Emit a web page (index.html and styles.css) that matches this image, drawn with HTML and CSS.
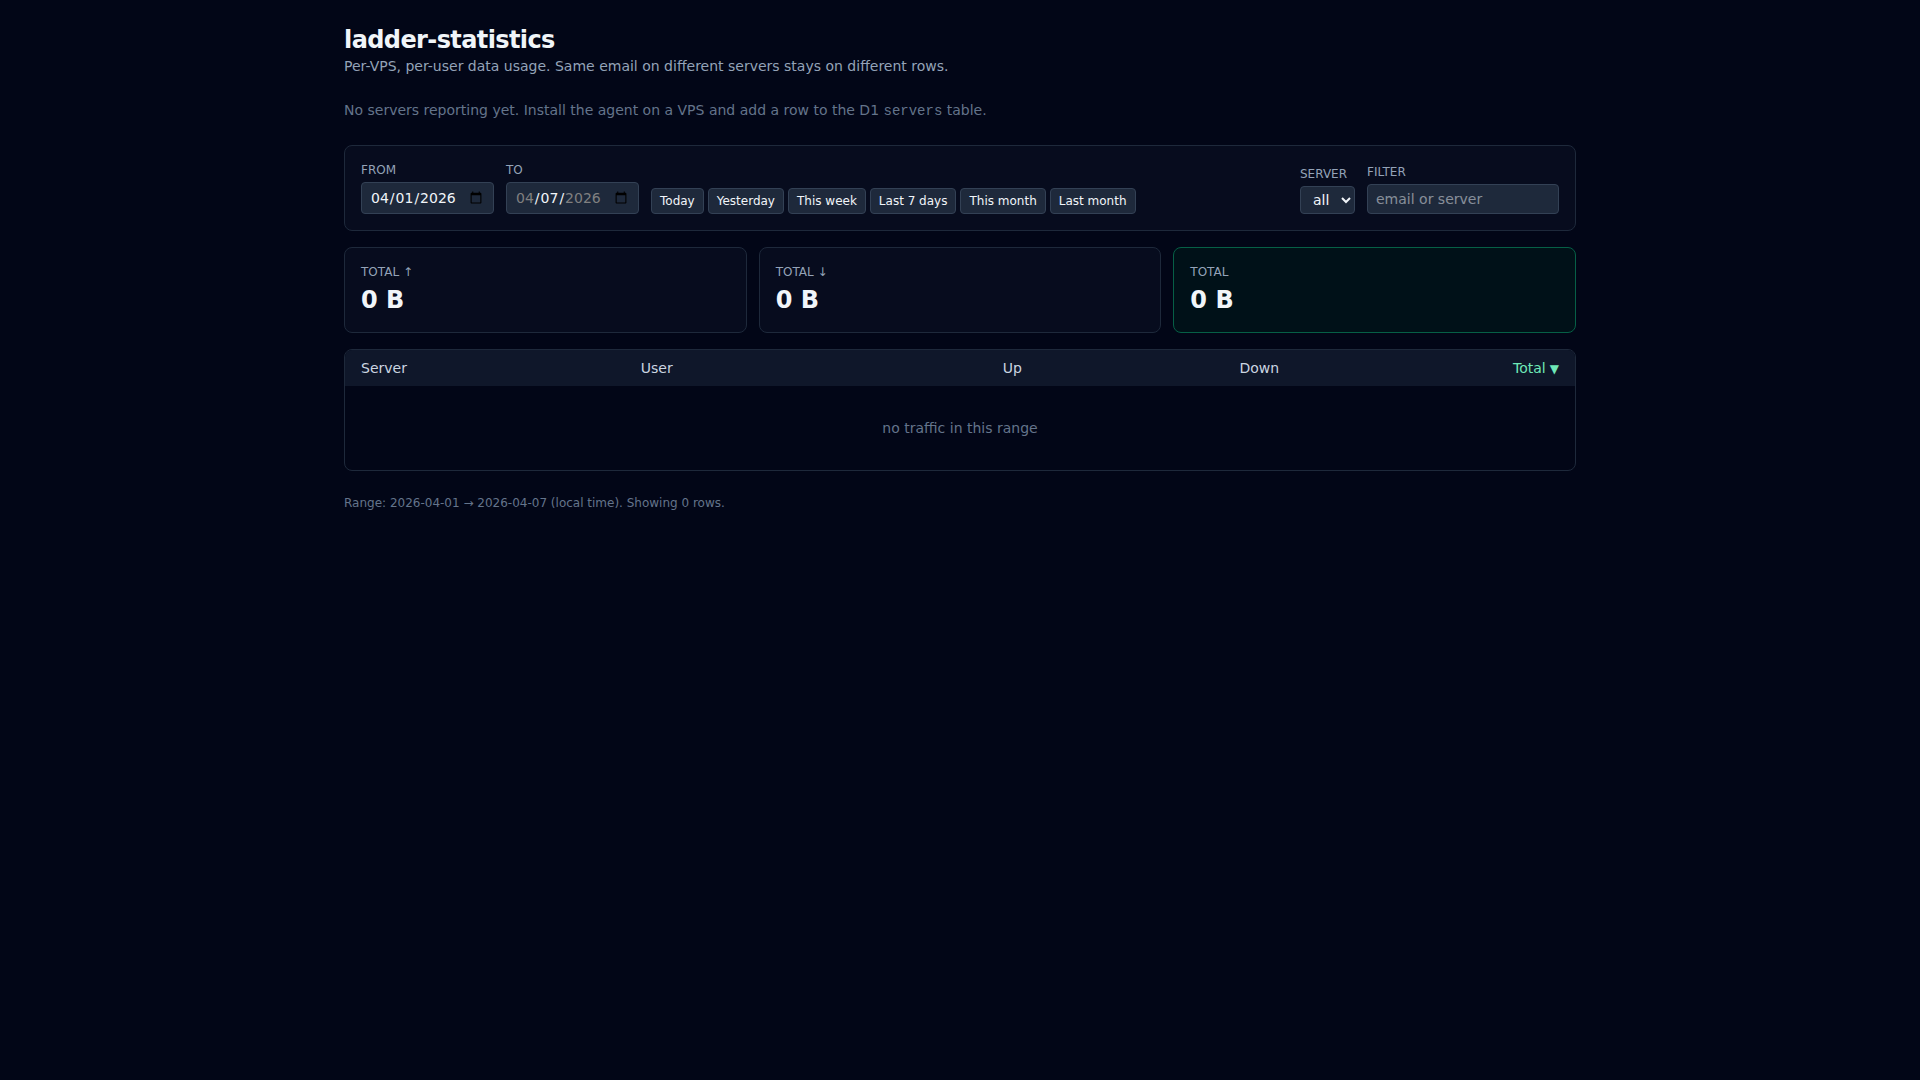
FILE: index.html
```html
<!DOCTYPE html>
<html lang="en">
<head>
<meta charset="utf-8">
<title>ladder-statistics</title>
<link rel="stylesheet" href="styles.css">
</head>
<body>
<main class="page">
  <header class="intro">
    <h1>ladder-statistics</h1>
    <p>Per-VPS, per-user data usage. Same email on different servers stays on different rows.</p>
  </header>
  <p class="notice">No servers reporting yet. Install the agent on a VPS and add a row to the D1 <code>servers</code> table.</p>
  <section class="filters">
    <label class="field"><span>From</span><input class="date" type="date" value="2026-04-01" max="2026-04-07"></label>
    <label class="field"><span>To</span><input class="date" type="date" value="2026-04-07" min="2026-04-01" max="2026-04-07"></label>
    <div class="presets">
      <button>Today</button><button>Yesterday</button><button>This week</button><button>Last 7 days</button><button>This month</button><button>Last month</button>
    </div>
    <div class="search">
      <label class="field"><span>Server</span><select><option>all</option></select></label>
      <label class="field"><span>Filter</span><input class="query" type="text" placeholder="email or server"></label>
    </div>
  </section>
  <section class="totals">
    <div class="card"><div class="label">Total ↑</div><div class="value">0 B</div></div>
    <div class="card"><div class="label">Total ↓</div><div class="value">0 B</div></div>
    <div class="card accent"><div class="label">Total</div><div class="value">0 B</div></div>
  </section>
  <div class="table-wrap">
    <table>
      <thead><tr><th>Server</th><th>User</th><th class="num">Up</th><th class="num">Down</th><th class="num sorted">Total<span class="arrow">▼</span></th></tr></thead>
      <tbody><tr><td colspan="5">no traffic in this range</td></tr></tbody>
    </table>
  </div>
  <footer>Range: 2026-04-01 → 2026-04-07 (local time). Showing 0 rows.</footer>
</main>
</body>
</html>
```
FILE: styles.css
```css
*, *::before, *::after { box-sizing: border-box; margin: 0; }
body {
  background: #020617;
  color: #f1f5f9;
  font: 14px/20px "DejaVu Sans", sans-serif;
}
button, input, select { font: inherit; color: inherit; }
.page { width: 1280px; margin: 0 auto; padding: 24px; }
.intro { margin-bottom: 24px; }
h1 { font-size: 24px; line-height: 32px; font-weight: 600; letter-spacing: -0.6px; }
.intro p { color: #94a3b8; }
.notice { color: #64748b; margin-bottom: 24px; }
code { font-family: "Liberation Mono", monospace; font-size: 14px; }
.filters {
  display: flex;
  align-items: flex-end;
  gap: 12px;
  padding: 16px;
  margin-bottom: 16px;
  border: 1px solid #1e293b;
  border-radius: 8px;
  background: rgba(15, 23, 42, 0.4);
}
.field { display: flex; flex-direction: column; }
.field span {
  margin-bottom: 4px;
  font-size: 12px;
  line-height: 16px;
  color: #94a3b8;
  text-transform: uppercase;
}
.field input, .field select {
  background: #1e293b;
  border: 1px solid #334155;
  border-radius: 4px;
  padding: 4px 8px;
}
.query { width: 192px; }
.query::placeholder { color: color-mix(in oklab, currentcolor 50%, transparent); }
.presets { display: flex; gap: 4px; }
.presets button {
  padding: 4px 8px;
  background: #1e293b;
  border: 1px solid #334155;
  border-radius: 4px;
  font-size: 12px;
  line-height: 16px;
}
.search { display: flex; align-items: flex-end; gap: 12px; margin-left: auto; }
.totals { display: grid; grid-template-columns: repeat(3, 1fr); gap: 12px; margin-bottom: 16px; }
.card {
  padding: 16px;
  border: 1px solid #1e293b;
  border-radius: 8px;
  background: rgba(15, 23, 42, 0.4);
}
.accent { border-color: #065f46; background: #001118; }
.label { font-size: 12px; line-height: 16px; color: #94a3b8; text-transform: uppercase; }
.value { margin-top: 4px; font-size: 24px; line-height: 32px; font-weight: 600; }
.table-wrap { overflow: hidden; border: 1px solid #1e293b; border-radius: 8px; }
table { width: 100%; border-collapse: collapse; }
thead { background: #0f172a; color: #cbd5e1; }
th { padding: 8px 16px; text-align: left; font-weight: 400; }
.num { text-align: right; }
.sorted { color: #6ee7b7; }
.arrow { margin-left: 4px; font-size: 12px; line-height: 16px; }
td { padding: 32px 16px; text-align: center; color: #64748b; }
footer { margin-top: 24px; font-size: 12px; line-height: 16px; color: #64748b; }
```
